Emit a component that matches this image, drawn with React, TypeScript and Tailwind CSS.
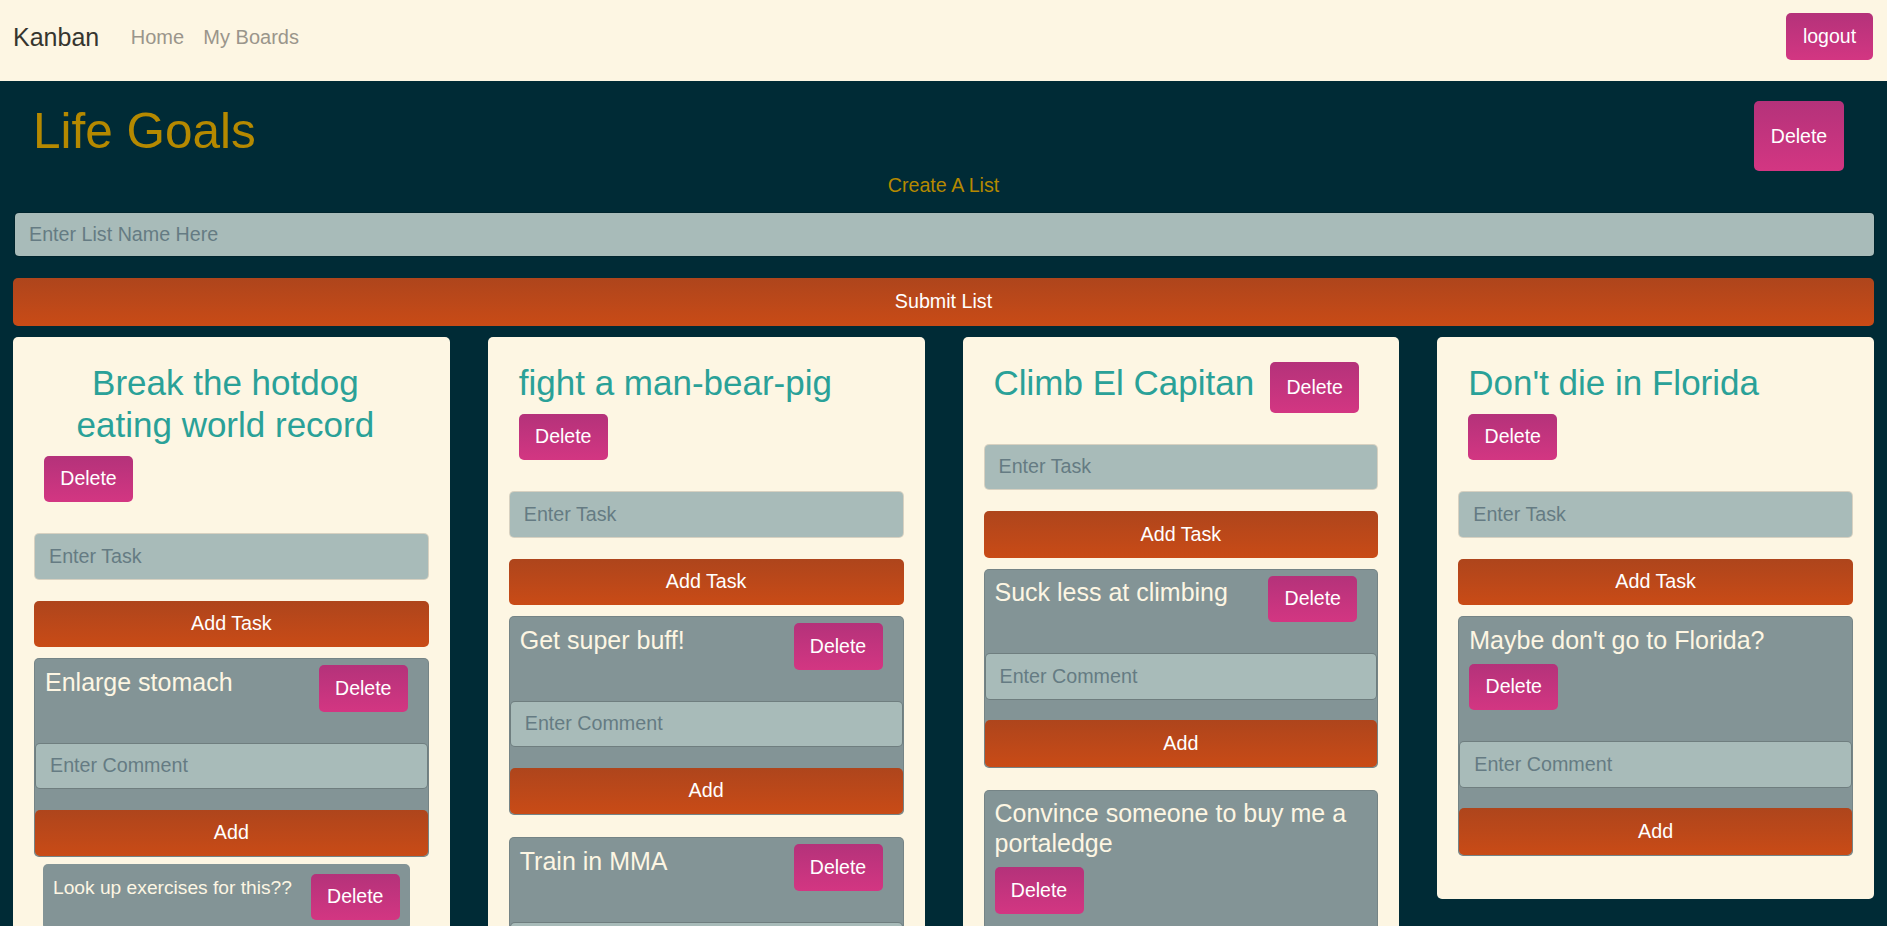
import React from 'react';

type Task = { title: string; comments?: string[] };
type List = { title: string; inline: boolean; tasks: Task[] };

const LISTS: List[] = [
  {
    title: 'Break the hotdog eating world record',
    inline: false,
    tasks: [{ title: 'Enlarge stomach', comments: ['Look up exercises for this??'] }],
  },
  {
    title: 'fight a man-bear-pig',
    inline: false,
    tasks: [{ title: 'Get super buff!' }, { title: 'Train in MMA' }],
  },
  {
    title: 'Climb El Capitan',
    inline: true,
    tasks: [{ title: 'Suck less at climbing' }, { title: 'Convince someone to buy me a portaledge' }],
  },
  {
    title: "Don't die in Florida",
    inline: false,
    tasks: [{ title: "Maybe don't go to Florida?" }],
  },
];

const pinkBtn = 'bg-linear-to-b from-[#b4327a] to-[#d33682] text-white rounded-[5px] text-[19.5px] leading-[29px]';
const orangeBtn = 'bg-linear-to-b from-[#ae451c] to-[#c94b16] text-white rounded-[5px] text-[19.7px] leading-[29px] w-full';
const field =
  'block w-full bg-[#a8bbb9] bg-clip-padding border border-black/15 rounded-[5px] px-[14px] text-[19.7px] text-[#073642] placeholder:text-[#657b83] outline-none';

function DeleteButton({ className = '' }: { className?: string }) {
  return (
    <button type="button" className={`${pinkBtn} w-[89px] shrink-0 ${className}`}>
      Delete
    </button>
  );
}

function TaskCard({ task }: { task: Task }) {
  return (
    <div className="mb-[22px]">
      <div className="bg-[#839496] border border-black/10 rounded-[5px]">
        <div className="flex flex-wrap justify-between items-start pt-[6px] pl-[10px] pr-[20px] pb-[31px]">
          <h5 className="mt-[1.5px] mb-[9px] text-[25px] leading-[30px] text-[#fdf6e3]">{task.title}</h5>
          <DeleteButton className="h-[46.5px]" />
        </div>
        <input className={`${field} h-[46.5px]`} placeholder="Enter Comment" />
        <button type="button" className={`${orangeBtn} h-[46.5px] mt-[20.5px]`}>
          Add
        </button>
      </div>
      {task.comments?.map((comment) => (
        <div
          key={comment}
          className="mt-[6.5px] ml-[9px] mr-[19px] bg-[#839496] rounded-[5px] p-[10px] flex justify-between items-start gap-[6px]"
        >
          <span className="text-[19.2px] leading-[28.8px] text-[#fdf6e3]">{comment}</span>
          <DeleteButton className="h-[46.5px]" />
        </div>
      ))}
    </div>
  );
}

function ListCard({ list }: { list: List }) {
  const titleClass = 'text-[35px] leading-[42px] text-[#2aa198] font-normal';
  return (
    <div className="bg-[#fdf6e3] rounded-[5px] px-[21px] pt-[25px] pb-[21px]">
      {list.inline ? (
        <div className="flex mb-[31px]">
          <h3 className={`${titleClass} ml-[10px] mr-[16px] mb-[9px]`}>{list.title}</h3>
          <DeleteButton />
        </div>
      ) : (
        <div className="mb-[31px] pr-[9px]">
          <h3 className={`${titleClass} inline-block align-top text-center ml-[10px] mr-[13px] mb-[10px]`}>
            {list.title}
          </h3>
          <div className="ml-[10px]">
            <DeleteButton className="h-[46.5px]" />
          </div>
        </div>
      )}
      <input className={`${field} h-[46.5px]`} placeholder="Enter Task" />
      <button type="button" className={`${orangeBtn} h-[46.5px] mt-[21px] mb-[11px]`}>
        Add Task
      </button>
      {list.tasks.map((task) => (
        <TaskCard key={task.title} task={task} />
      ))}
    </div>
  );
}

export default function App() {
  return (
    <div className="min-h-screen bg-[#002b36] font-['Liberation_Sans',Arial,sans-serif] text-[19.7px] leading-[29.5px]">
      <nav className="h-[81px] bg-[#fdf6e3] flex justify-between items-start pt-[13px] pl-[13px] pr-[14px]">
        <div className="flex items-center h-[47px]">
          <span className="text-[25px] leading-[30px] text-[#36352f] mr-[22px]">Kanban</span>
          <a className="px-[9.6px] text-[20px] leading-[30px] text-[#9a958b]">Home</a>
          <a className="px-[9.6px] text-[20px] leading-[30px] text-[#9a958b]">My Boards</a>
        </div>
        <button type="button" className={`${pinkBtn} w-[87px] h-[47px]`}>
          logout
        </button>
      </nav>

      <div className="flex justify-between items-start pt-[20px] pl-[33px] pr-[43px]">
        <h1 className="text-[49.5px] leading-[59.4px] text-[#b58900] font-normal">Life Goals</h1>
        <button type="button" className={`${pinkBtn} w-[90px] h-[70px]`}>
          Delete
        </button>
      </div>

      <p className="text-center text-[#b58900]">Create A List</p>

      <div className="px-[13px] pb-[40px]">
        <input className={`${field} h-[45px] mt-[11px] mx-[1px] w-[calc(100%-2px)] px-[13px]`} placeholder="Enter List Name Here" />
        <button type="button" className={`${orangeBtn} h-[48px] mt-[21px]`}>
          Submit List
        </button>

        <div className="grid grid-cols-4 gap-x-[38px] items-start mt-[11px]">
          {LISTS.map((list) => (
            <ListCard key={list.title} list={list} />
          ))}
        </div>
      </div>
    </div>
  );
}
